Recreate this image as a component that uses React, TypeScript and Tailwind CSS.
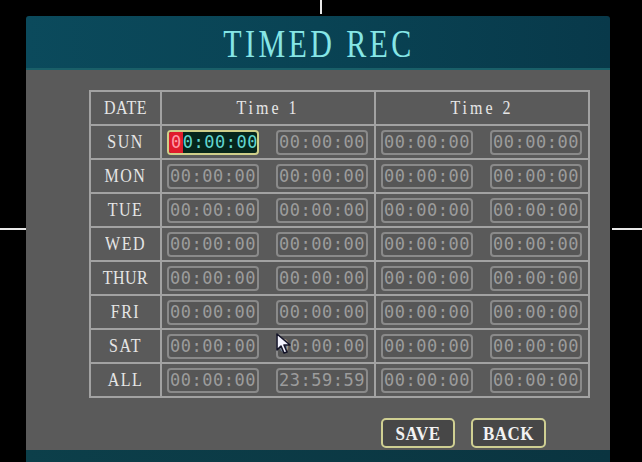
import React from "react";

const days = ["SUN", "MON", "TUE", "WED", "THUR", "FRI", "SAT", "ALL"];

const serif = { fontFamily: '"Liberation Serif", "DejaVu Serif", serif' };
const sansMono = { fontFamily: '"DejaVu Sans Mono", "Liberation Mono", monospace' };

function Label({ text, spacing }: { text: string; spacing: string }) {
  return (
    <span
      className={`inline-block scale-y-[1.2] text-[16px] leading-none text-[#e6e6e6] ${spacing}`}
      style={serif}
    >
      {text}
    </span>
  );
}

function TimeBox({ value }: { value: string }) {
  return (
    <div
      className="w-[92px] h-[25px] rounded-[4px] border-2 border-[#8a8a8a] bg-[#565656] flex items-center justify-center text-[17px] leading-none text-[#9c9c9c] tracking-[0.5px]"
      style={sansMono}
    >
      {value}
    </div>
  );
}

function ActiveBox() {
  return (
    <div
      className="w-[92px] h-[25px] rounded-[4px] border-2 border-[#cfcf8a] bg-[#06261c] flex items-center overflow-hidden text-[17px] leading-none text-[#62d6d0] tracking-[0.5px]"
      style={sansMono}
    >
      <span className="bg-[#e01c2c] text-[#ff9aa6] h-full flex items-center pl-[2px] pr-[1px]">0</span>
      <span>0:00:00</span>
    </div>
  );
}

function Cursor() {
  return (
    <svg className="absolute left-[276px] top-[333px]" width="18" height="22" viewBox="0 0 18 22">
      <path d="M1 1 L1 17 L5 13 L8 20 L11 19 L8 12 L14 12 Z" fill="#f4f4ff" stroke="#141428" strokeWidth="1.6" strokeLinejoin="round" />
    </svg>
  );
}

export default function App() {
  const cell = "border-r-2 border-b-2 border-[#a2a2a2]";

  return (
    <div className="relative w-[642px] h-[462px] bg-black overflow-hidden">
      {/* crosshair marks */}
      <div className="absolute left-[320px] top-0 w-[2px] h-[14px] bg-[#e8e8e8]" />
      <div className="absolute left-0 top-[228px] w-[26px] h-[2px] bg-[#e8e8e8]" />
      <div className="absolute right-0 top-[228px] w-[30px] h-[2px] bg-[#e8e8e8]" />

      <div className="ml-[26px] pt-[16px] w-[584px]">
        {/* title bar */}
        <div className="h-[54px] rounded-t-[3px] bg-gradient-to-r from-[#0b4a5c] via-[#094354] to-[#08394a] border-b-2 border-[#1a5f68] flex items-center justify-center">
          <span
            className="inline-block text-[30px] leading-none text-[#86e6e6] scale-y-[1.35] tracking-[3.4px] pt-[2px] pl-[2px]"
            style={serif}
          >
            TIMED REC
          </span>
        </div>

        {/* body */}
        <div className="h-[380px] bg-[#5a5a5a] pt-[20px] pl-[63px]">
          <div className="w-[501px] border-l-2 border-t-2 border-[#a2a2a2] grid grid-cols-[71px_214px_214px] auto-rows-[34px]">
            <div className={`${cell} flex items-center justify-center`}>
              <Label text="DATE" spacing="tracking-[0.5px]" />
            </div>
            <div className={`${cell} flex items-center justify-center`}>
              <Label text="Time 1" spacing="tracking-[3px]" />
            </div>
            <div className={`${cell} flex items-center justify-center`}>
              <Label text="Time 2" spacing="tracking-[3px]" />
            </div>

            {days.map((d, i) => (
              <React.Fragment key={d}>
                <div className={`${cell} flex items-center justify-center`}>
                  <Label text={d} spacing={d.length === 3 ? "tracking-[1.5px]" : "tracking-[0.5px]"} />
                </div>
                <div className={`${cell} flex items-center pl-[5px] gap-[17px]`}>
                  {i === 0 ? <ActiveBox /> : <TimeBox value="00:00:00" />}
                  <TimeBox value={d === "ALL" ? "23:59:59" : "00:00:00"} />
                </div>
                <div className={`${cell} flex items-center pl-[5px] gap-[17px]`}>
                  <TimeBox value="00:00:00" />
                  <TimeBox value="00:00:00" />
                </div>
              </React.Fragment>
            ))}
          </div>

          <div className="flex gap-[16px] pl-[292px] mt-[20px]">
            <button className="w-[74px] h-[30px] rounded-[5px] border-2 border-[#cfcf92] bg-[#474747] flex items-center justify-center">
              <span className="inline-block scale-y-[1.15] text-[17px] leading-none font-bold text-[#f2f2f2] tracking-[0.5px]" style={serif}>
                SAVE
              </span>
            </button>
            <button className="w-[75px] h-[30px] rounded-[5px] border-2 border-[#cfcf92] bg-[#474747] flex items-center justify-center">
              <span className="inline-block scale-y-[1.15] text-[17px] leading-none font-bold text-[#f2f2f2] tracking-[0.5px]" style={serif}>
                BACK
              </span>
            </button>
          </div>
        </div>

        {/* bottom strip */}
        <div className="h-[12px] bg-gradient-to-r from-[#0c3f4a] to-[#0a3440]" />
      </div>

      <Cursor />
    </div>
  );
}
